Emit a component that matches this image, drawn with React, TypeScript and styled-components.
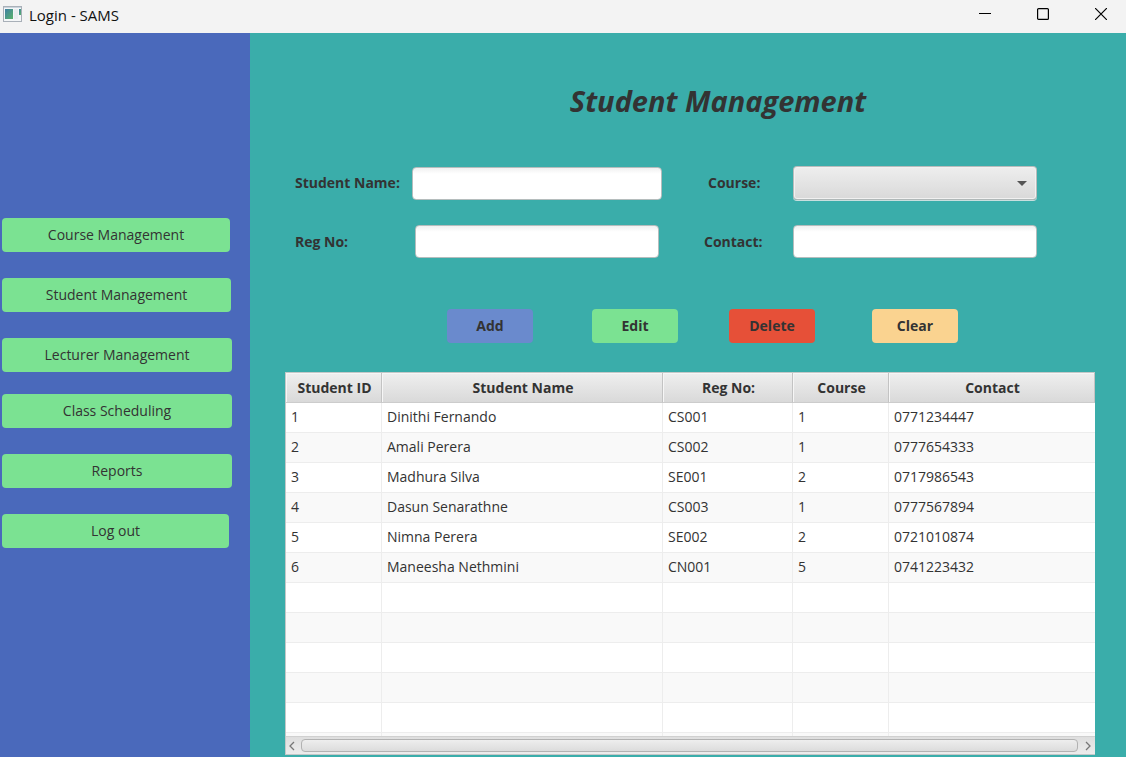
import React from "react";
import styled, { createGlobalStyle, css } from "styled-components";

const GlobalStyle = createGlobalStyle`
  *, *::before, *::after { box-sizing: border-box; }
  html, body { margin: 0; }
  body, button, input, select {
    font-family: "Open Sans", "Noto Sans", sans-serif;
    font-size: 14px;
    line-height: 20px;
    color: #333333;
  }
`;

const Window = styled.div`
  display: flex;
  flex-direction: column;
  min-height: 100vh;
  background: #3aadaa;
`;

const TitleBar = styled.header`
  display: flex;
  align-items: center;
  height: 33px;
  padding-left: 3px;
  background: #f3f3f3;
  color: #111111;
`;

const AppIcon = styled.svg`
  display: block;
  margin-bottom: 5px;
`;

const WindowTitle = styled.span`
  flex: 1;
  margin-left: 7px;
  padding-bottom: 4px;
  font-size: 15px;
`;

const CaptionButton = styled.button`
  display: grid;
  place-items: center;
  width: 58px;
  height: 33px;
  padding: 0 0 6px;
  border: 0;
  background: transparent;
  &:last-child { width: 54px; padding-left: 4px; }
`;

const Body = styled.div`
  display: flex;
  flex: 1;
`;

const Sidebar = styled.nav`
  display: flex;
  flex-direction: column;
  flex: 0 0 250px;
  gap: 22px;
  padding: 185px 18px 0 2px;
  background: #4a69bb;
`;

const NavGroup = styled.div`
  display: flex;
  flex-direction: column;
  gap: 26px;
`;

const buttonBase = css`
  height: 34px;
  padding: 0 8px;
  border: 0;
  border-radius: 4px;
`;

const NavButton = styled.button<{ $inset?: number }>`
  ${buttonBase}
  margin-right: ${(p) => p.$inset ?? 0}px;
  background: #7be292;
`;

const Main = styled.main`
  flex: 1;
  min-width: 0;
  padding: 48px 31px 2px 35px;
`;

const Heading = styled.h1`
  margin: 0;
  padding-left: 56px;
  font-size: 29px;
  line-height: 40px;
  font-weight: 700;
  font-style: italic;
  text-align: center;
`;

const Form = styled.form`
  display: grid;
  grid-template-columns: 117px minmax(0, 250fr) 42px 89px minmax(0, 244fr);
  row-gap: 25px;
  align-items: center;
  padding: 45px 58px 0 10px;
`;

const Label = styled.label<{ $indent?: number }>`
  padding-left: ${(p) => p.$indent ?? 0}px;
  font-weight: 700;
  white-space: nowrap;
`;

const RightLabel = styled(Label)`
  grid-column: 4;
`;

const TextField = styled.input<{ $inset?: number }>`
  height: 33px;
  margin: 0 ${(p) => p.$inset ?? 0}px;
  padding: 4px 8px;
  border: 1px solid #b5bdbd;
  border-radius: 4px;
  background: linear-gradient(#f0f0f0, #ffffff 6px);
`;

const SelectWrap = styled.div`
  display: grid;
  align-items: center;
  > * { grid-area: 1 / 1; }
`;

const Select = styled.select`
  appearance: none;
  width: 100%;
  height: 34px;
  padding: 4px 28px 4px 8px;
  border: 1px solid #b9bcbc;
  border-bottom-color: #b0b8b8;
  border-radius: 4px;
  background: linear-gradient(#eeeeee, #d9d9d9);
  box-shadow: inset 0 0 0 1px #f1f1f1, 0 1px 0 #c9dede;
`;

const Arrow = styled.svg`
  justify-self: end;
  margin-right: 10px;
  pointer-events: none;
`;

const Actions = styled.div`
  display: grid;
  grid-template-columns: 145fr 137fr 143fr 86fr;
  padding: 51px 137px 0 162px;
`;

const ActionButton = styled.button<{ $color: string }>`
  ${buttonBase}
  width: 86px;
  background: ${(p) => p.$color};
  font-weight: 700;
`;

const TableFrame = styled.div`
  margin-top: 29px;
  border: 1px solid #c4c8c8;
  border-right: 0;
  background: #ffffff;
`;

const Table = styled.table`
  width: 100%;
  table-layout: fixed;
  border-collapse: separate;
  border-spacing: 0;
`;

const HeadCell = styled.th<{ $width?: number }>`
  width: ${(p) => (p.$width ? `${p.$width}px` : "auto")};
  height: 30px;
  padding: 0 0 0 2px;
  border-right: 1px solid #c3c3c3;
  border-bottom: 1px solid #cccccc;
  background: linear-gradient(#efefef, #d9d9d9);
  box-shadow: inset 1px 1px 0 #f6f6f6;
  white-space: nowrap;
`;

const Row = styled.tr`
  background: #ffffff;
  &:nth-child(even) { background: #f9f9f9; }
`;

const Cell = styled.td`
  height: 30px;
  padding: 0 4px 1px 5px;
  border-right: 1px solid #ededed;
  border-bottom: 1px solid #ededed;
  &:last-child { border-right: 0; }
`;

const ClippedBody = styled.div`
  height: 363px;
  overflow: hidden;
`;

const ScrollBar = styled.div`
  display: flex;
  align-items: center;
  height: 18px;
  border-top: 1px solid #d0d0d0;
  background: linear-gradient(#dedede, #ececec);
`;

const ScrollButton = styled.button`
  display: grid;
  place-items: center;
  width: 15px;
  height: 17px;
  padding: 0 3px 0 0;
  border: 0;
  background: transparent;
  &:last-child { width: 17px; padding: 0 0 0 3px; }
`;

const Thumb = styled.div`
  flex: 1;
  height: 13px;
  border: 1px solid #b2b2b2;
  border-radius: 4px;
  background: linear-gradient(#eeeeee, #dcdcdc);
`;

const students = [
  ["1", "Dinithi Fernando", "CS001", "1", "0771234447"],
  ["2", "Amali Perera", "CS002", "1", "0777654333"],
  ["3", "Madhura Silva", "SE001", "2", "0717986543"],
  ["4", "Dasun Senarathne", "CS003", "1", "0777567894"],
  ["5", "Nimna Perera", "SE002", "2", "0721010874"],
  ["6", "Maneesha Nethmini", "CN001", "5", "0741223432"],
];

const columns = [
  { title: "Student ID", width: 96 },
  { title: "Student Name", width: 281 },
  { title: "Reg No:", width: 130 },
  { title: "Course", width: 96 },
  { title: "Contact" },
];

const emptyRows = [0, 1, 2, 3, 4, 5];

export default function App() {
  return (
    <Window>
      <GlobalStyle />
      <TitleBar>
        <AppIcon width="19" height="16" viewBox="0 0 19 16" aria-hidden="true">
          <defs>
            <linearGradient id="pane" x1="0" y1="0" x2="1" y2="1">
              <stop offset="0" stopColor="#3f7fa3" />
              <stop offset="1" stopColor="#59b36b" />
            </linearGradient>
          </defs>
          <rect x="0.5" y="0.5" width="18" height="15" fill="#f4f6f7" stroke="#a9b0b8" />
          <path d="M1 1.5h17" stroke="#c9d3dc" />
          <rect x="2" y="3" width="8" height="10" fill="url(#pane)" />
          <rect x="11" y="3" width="4" height="10" fill="#e9edf0" />
          <rect x="16" y="3" width="2" height="6" fill="url(#pane)" />
        </AppIcon>
        <WindowTitle>Login - SAMS</WindowTitle>
        <CaptionButton aria-label="Minimize">
          <svg width="12" height="12" viewBox="0 0 12 12"><path d="M0 5.5h12" stroke="#000" /></svg>
        </CaptionButton>
        <CaptionButton aria-label="Maximize">
          <svg width="12" height="12" viewBox="0 0 12 12">
            <rect x="0.6" y="0.6" width="10.8" height="10.8" rx="1" fill="none" stroke="#000" strokeWidth="1.2" />
          </svg>
        </CaptionButton>
        <CaptionButton aria-label="Close">
          <svg width="12" height="12" viewBox="0 0 12 12"><path d="M0 0l12 12M12 0L0 12" stroke="#000" strokeWidth="1.2" /></svg>
        </CaptionButton>
      </TitleBar>
      <Body>
        <Sidebar>
          <NavGroup>
            <NavButton $inset={2}>Course Management</NavButton>
            <NavButton $inset={1}>Student Management</NavButton>
            <NavButton>Lecturer Management</NavButton>
          </NavGroup>
          <NavGroup>
            <NavButton>Class Scheduling</NavButton>
            <NavButton>Reports</NavButton>
            <NavButton $inset={3}>Log out</NavButton>
          </NavGroup>
        </Sidebar>
        <Main>
          <Heading>Student Management</Heading>
          <Form>
            <Label htmlFor="student-name">Student Name:</Label>
            <TextField id="student-name" />
            <RightLabel htmlFor="course" $indent={4}>Course:</RightLabel>
            <SelectWrap>
              <Select id="course" defaultValue=""><option value="" /></Select>
              <Arrow width="10" height="5" viewBox="0 0 10 5"><path d="M0 0h10L5 5z" fill="#555555" /></Arrow>
            </SelectWrap>
            <Label htmlFor="reg-no">Reg No:</Label>
            <TextField id="reg-no" $inset={3} />
            <RightLabel htmlFor="contact">Contact:</RightLabel>
            <TextField id="contact" />
          </Form>
          <Actions>
            <ActionButton $color="#6a8acd">Add</ActionButton>
            <ActionButton $color="#7be292">Edit</ActionButton>
            <ActionButton $color="#e65038">Delete</ActionButton>
            <ActionButton $color="#fad390">Clear</ActionButton>
          </Actions>
          <TableFrame>
            <ClippedBody>
              <Table>
                <thead>
                  <tr>
                    {columns.map((c) => (
                      <HeadCell key={c.title} $width={c.width}>{c.title}</HeadCell>
                    ))}
                  </tr>
                </thead>
                <tbody>
                  {students.map((s) => (
                    <Row key={s[0]}>{s.map((v, i) => <Cell key={i}>{v}</Cell>)}</Row>
                  ))}
                  {emptyRows.map((r) => (
                    <Row key={`empty-${r}`}>{columns.map((c) => <Cell key={c.title} />)}</Row>
                  ))}
                </tbody>
              </Table>
            </ClippedBody>
            <ScrollBar>
              <ScrollButton aria-label="Scroll left">
                <svg width="6" height="10" viewBox="0 0 6 10"><path d="M5 1L1 5l4 4" fill="none" stroke="#777" strokeWidth="1.3" /></svg>
              </ScrollButton>
              <Thumb />
              <ScrollButton aria-label="Scroll right">
                <svg width="6" height="10" viewBox="0 0 6 10"><path d="M1 1l4 4-4 4" fill="none" stroke="#777" strokeWidth="1.3" /></svg>
              </ScrollButton>
            </ScrollBar>
          </TableFrame>
        </Main>
      </Body>
    </Window>
  );
}
